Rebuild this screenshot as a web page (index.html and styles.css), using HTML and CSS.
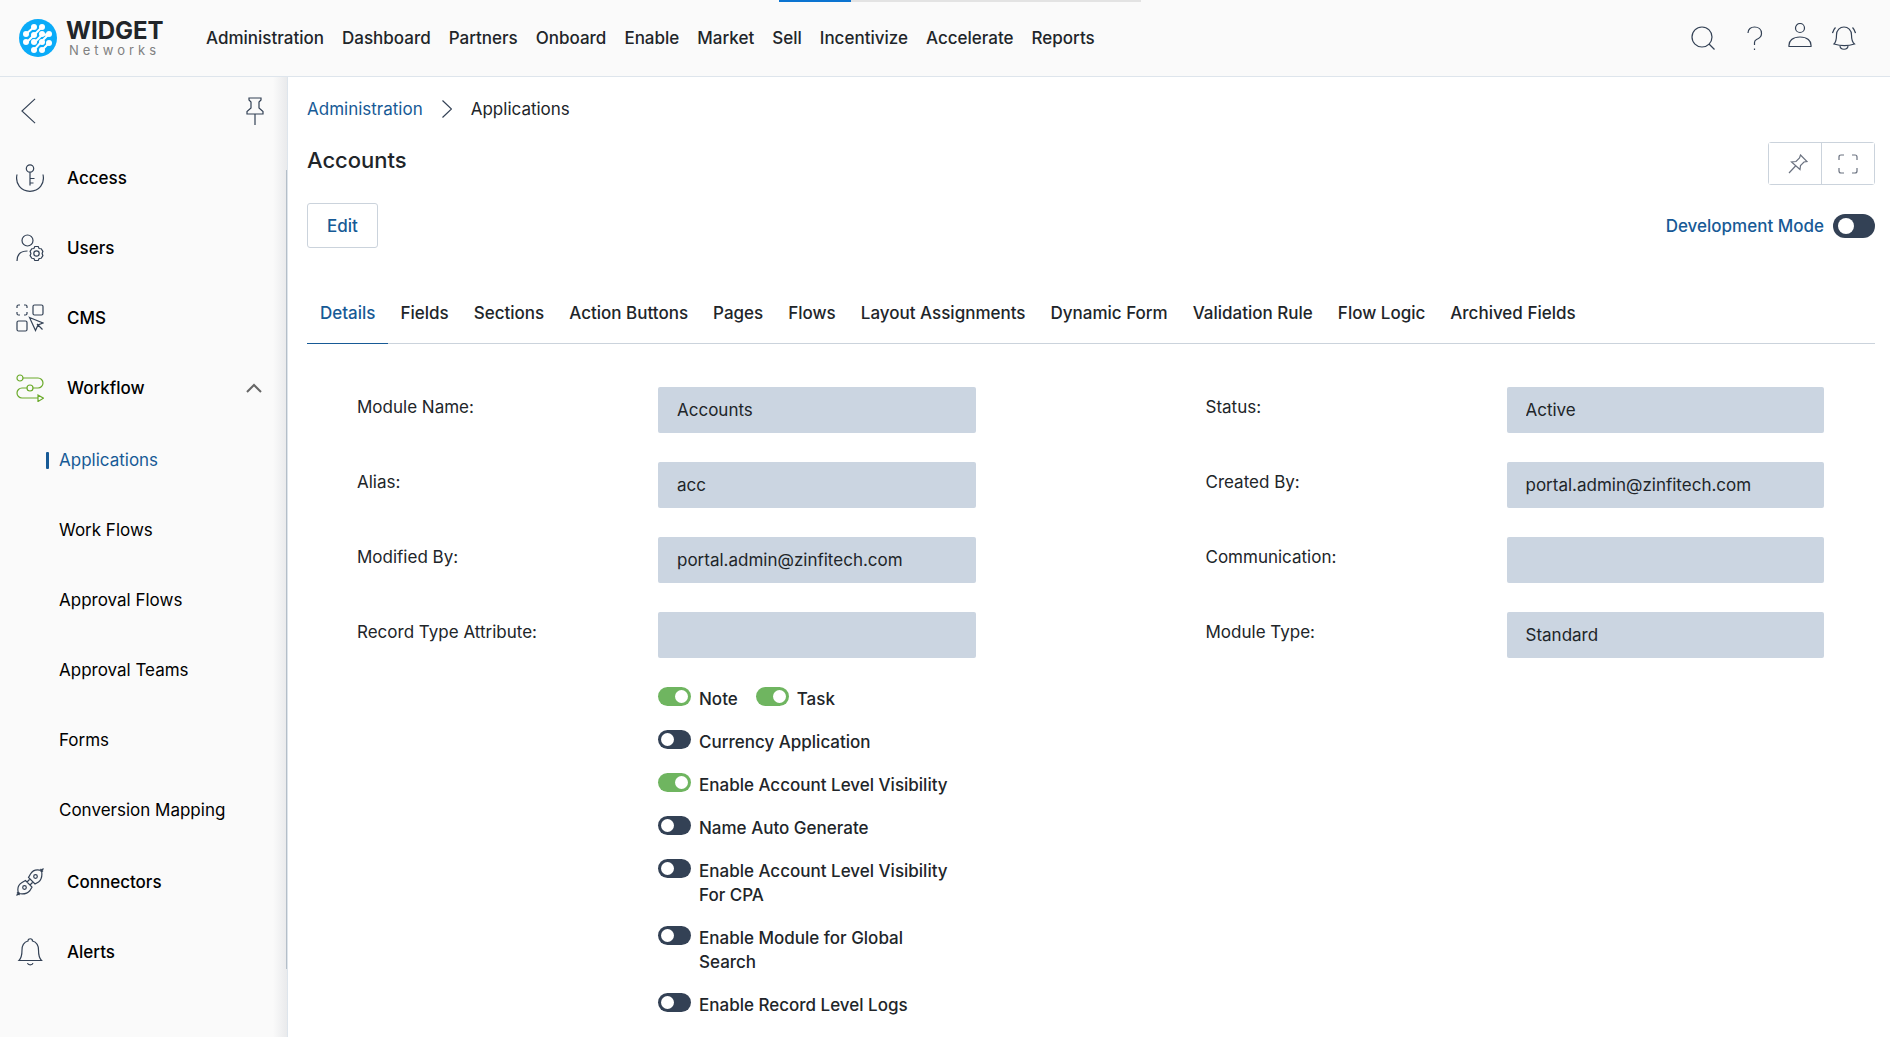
FILE: index.html
```html
<!DOCTYPE html>
<html lang="en">
<head>
<meta charset="utf-8">
<title>Accounts - Applications</title>
<link rel="stylesheet" href="styles.css">
</head>
<body>
<header class="topbar">
  <div class="loader"><div class="loader-fill"></div></div>
  <a class="brand" href="#">
    <svg class="brand-mark" viewBox="0 0 38 38" aria-hidden="true">
      <circle cx="19" cy="19" r="19" fill="#0aabf8"/>
      <g stroke="#fff" stroke-width="2" stroke-linecap="round">
        <path d="M7 15L15 8M8 23L15 16L23 8M15 24L23 16L30 15M15 31L23 22L30 15M23 31L30 24"/>
      </g>
      <g fill="#fff">
        <circle cx="15" cy="8" r="3"/><circle cx="23" cy="8" r="3"/>
        <circle cx="7" cy="15" r="3"/><circle cx="15" cy="16" r="3"/><circle cx="23" cy="15" r="3"/><circle cx="30" cy="15" r="3"/>
        <circle cx="7" cy="23" r="3"/><circle cx="15" cy="23" r="3"/><circle cx="23" cy="23" r="3"/><circle cx="30" cy="24" r="3"/>
        <circle cx="15" cy="31" r="3"/><circle cx="23" cy="31" r="3"/>
      </g>
    </svg>
    <span class="brand-text">
      <span class="brand-name">WIDGET</span>
      <span class="brand-sub">Networks</span>
    </span>
  </a>
  <nav class="main-nav" aria-label="Main">
    <a href="#">Administration</a>
    <a href="#">Dashboard</a>
    <a href="#">Partners</a>
    <a href="#">Onboard</a>
    <a href="#">Enable</a>
    <a href="#">Market</a>
    <a href="#">Sell</a>
    <a href="#">Incentivize</a>
    <a href="#">Accelerate</a>
    <a href="#">Reports</a>
  </nav>
  <div class="tools">
    <button class="icon-btn tool-search" type="button" aria-label="Search">
      <svg viewBox="0 0 24 24"><circle cx="11" cy="11" r="10"/><path d="M18 18l5.500 5.500"/></svg>
    </button>
    <button class="icon-btn tool-help" type="button" aria-label="Help">
      <svg viewBox="0 0 24 24"><path d="M5 7C5 3 8 1 11.500 1c4 0 7 2.500 7 6.500 0 3.500-2.500 5-5 6-1.500.700-2 1.500-2 3V19M11.500 22.500V24"/></svg>
    </button>
    <button class="icon-btn tool-user" type="button" aria-label="Profile">
      <svg viewBox="0 0 24 24"><circle cx="12" cy="5" r="4.500"/><path d="M1 23.500c-.600-6 4-9.500 11-9.500s11.600 3.500 11 9.500z"/></svg>
    </button>
    <button class="icon-btn tool-bell" type="button" aria-label="Notifications">
      <svg viewBox="0 0 24 24"><path d="M2 18c2-2 2.500-4 2.500-9C4.500 4 8 1 12 1s7.500 3 7.500 8c0 5 .5 7 3 9-6 2-14 2-20.500 0zM8 19.500c0 5 8 5 8 0M3.500 1.500C2 3 1 5 .500 7M20.500 1.500C22 3 23 5 23.500 7"/></svg>
    </button>
  </div>
</header>

<div class="shell">
  <aside class="sidebar">
    <div class="side-head">
      <button class="icon-btn" type="button" aria-label="Back">
        <svg class="back-icon" viewBox="0 0 16 28"><path d="M15 1L1 14l14 13"/></svg>
      </button>
      <button class="icon-btn" type="button" aria-label="Pin menu">
        <svg class="pin-icon" viewBox="0 0 18 28"><path d="M3 1h12v2l-2 2v6l4 3.500V17H1v-2.500L5 11V5L3 3zM9 17v11"/></svg>
      </button>
    </div>
    <nav class="side-nav" aria-label="Administration">
      <a class="side-item" href="#">
        <svg viewBox="0 0 28 28"><circle cx="14" cy="4.500" r="3.700"/><path d="M14 8.200V21.500M14 14.500h4.500M14 19h3.500M1 10.500C-1 20 5 27.300 14 27.300S29 20 27 10.500"/></svg>
        Access
      </a>
      <a class="side-item" href="#">
        <svg viewBox="0 0 28 28"><circle cx="11.500" cy="6.500" r="5.500"/><path d="M1 27c0-7 3.500-10 10.500-10M18.800 12.500h3.400l.9 2 2.100.2 1.700 2.600-.8 2.200.8 2.200-1.700 2.600-2.100.2-.9 2h-3.400l-.9-2-2.100-.2-1.700-2.600.8-2.200-.8-2.200 1.700-2.600 2.100-.2z"/><circle cx="20.500" cy="19.500" r="2.700"/></svg>
        Users
      </a>
      <a class="side-item" href="#">
        <svg viewBox="0 0 28 28"><rect x="17" y="1" width="10" height="10" rx="1.500"/><rect x="1" y="17" width="10" height="10" rx="1.500"/><path d="M1 4V2.500Q1 1 2.500 1H4M8 1h1.500Q11 1 11 2.500V4M11 8v1.500Q11 11 9.500 11H8M4 11H2.500Q1 11 1 9.500V8M13.500 13.500l13.500 5.500-5 2-2.500 5.500zM21 20l5.500 5.500"/></svg>
        CMS
      </a>
      <a class="side-item side-item-open" href="#" aria-expanded="true">
        <svg viewBox="0 0 28 28"><circle cx="4" cy="4" r="3"/><circle cx="14" cy="14" r="3"/><path d="M7 4h15a5 5 0 0 1 0 10H17M11 14H6a5 5 0 0 0 0 10h16M22 21v6.500l5.500-3.300z"/></svg>
        Workflow
        <svg class="chevron" viewBox="0 0 16 10"><path d="M1 9l7-7 7 7"/></svg>
      </a>
      <div class="side-sub">
        <a class="sub-item sub-active" href="#" aria-current="page">Applications</a>
        <a class="sub-item" href="#">Work Flows</a>
        <a class="sub-item" href="#">Approval Flows</a>
        <a class="sub-item" href="#">Approval Teams</a>
        <a class="sub-item" href="#">Forms</a>
        <a class="sub-item" href="#">Conversion Mapping</a>
      </div>
      <a class="side-item" href="#">
        <svg viewBox="0 0 28 28"><path d="M.500 27.500l3-3M1 24.500l2.500 2.500M2.500 25.500C1 20.500 2.500 16.500 6 14.500l3.500-2 6.500 6.500-2 3.500c-2.500 3-6.500 4-11.500 3zM24.500 3.500l3-3M24.500 1l2.500 2.500M25.500 2.500c-5-1.500-9 0-11 3.500l-2 3.500 6.500 6.500 3.500-2c3-2.500 4-6.500 3-11.500zM11 14l2.500-2.500M14 17l2.500-2.500"/><circle cx="8.500" cy="19.500" r="1.800"/><circle cx="19.500" cy="8.500" r="1.800"/></svg>
        Connectors
      </a>
      <a class="side-item" href="#">
        <svg viewBox="0 0 28 28"><path d="M3 22.500c2.500-2.500 3-5 3-10.500C6 7 8.500 4 12 3c0-3 4.500-3 4.500 0 3.500 1 6 4 6 9 0 5.500.500 8 3 10.500zM11.500 25c.5 2.500 5 2.500 5.500 0"/></svg>
        Alerts
      </a>
    </nav>
  </aside>

  <main class="content">
    <nav class="crumbs" aria-label="Breadcrumb">
      <a href="#">Administration</a>
      <svg viewBox="0 0 10 18" aria-hidden="true"><path d="M.500.500L9.500 9l-9 8.500"/></svg>
      <span>Applications</span>
    </nav>

    <div class="title-row">
      <h1>Accounts</h1>
      <div class="btn-group">
        <button class="btn-pin" type="button" aria-label="Pin page">
          <svg viewBox="0 0 20 20"><path d="M12.500 1l6.500 6.500-3 .5-3.500 3.500-.5 4L3.500 8l4.500-.5L11.500 4zM7.500 12L1 19"/></svg>
        </button>
        <button type="button" aria-label="Full screen">
          <svg viewBox="0 0 20 20"><path d="M1 6V3Q1 1 3 1H6M14 1h3Q19 1 19 3V6M19 14v3Q19 19 17 19H14M6 19H3Q1 19 1 17V14"/></svg>
        </button>
      </div>
    </div>

    <div class="action-row">
      <button class="btn-edit" type="button">Edit</button>
      <label class="dev-mode">Development Mode <input class="switch switch-lg" type="checkbox"></label>
    </div>

    <div class="tabs" role="tablist">
      <button class="tab tab-active" type="button" role="tab" aria-selected="true">Details</button>
      <button class="tab" type="button" role="tab">Fields</button>
      <button class="tab" type="button" role="tab">Sections</button>
      <button class="tab" type="button" role="tab">Action Buttons</button>
      <button class="tab" type="button" role="tab">Pages</button>
      <button class="tab" type="button" role="tab">Flows</button>
      <button class="tab" type="button" role="tab">Layout Assignments</button>
      <button class="tab" type="button" role="tab">Dynamic Form</button>
      <button class="tab" type="button" role="tab">Validation Rule</button>
      <button class="tab" type="button" role="tab">Flow Logic</button>
      <button class="tab" type="button" role="tab">Archived Fields</button>
    </div>

    <form class="details">
      <div class="field"><label for="module-name">Module Name:</label><input id="module-name" type="text" value="Accounts" readonly></div>
      <div class="field"><label for="status">Status:</label><input id="status" type="text" value="Active" readonly></div>
      <div class="field"><label for="alias">Alias:</label><input id="alias" type="text" value="acc" readonly></div>
      <div class="field"><label for="created-by">Created By:</label><input id="created-by" type="text" value="portal.admin@zinfitech.com" readonly></div>
      <div class="field"><label for="modified-by">Modified By:</label><input id="modified-by" type="text" value="portal.admin@zinfitech.com" readonly></div>
      <div class="field"><label for="communication">Communication:</label><input id="communication" type="text" readonly></div>
      <div class="field"><label for="record-type">Record Type Attribute:</label><input id="record-type" type="text" readonly></div>
      <div class="field"><label for="module-type">Module Type:</label><input id="module-type" type="text" value="Standard" readonly></div>
      <div class="options">
        <div class="option-row">
          <label class="option"><input class="switch" type="checkbox" checked><span>Note</span></label>
          <label class="option"><input class="switch" type="checkbox" checked><span>Task</span></label>
        </div>
        <label class="option"><input class="switch" type="checkbox"><span>Currency Application</span></label>
        <label class="option"><input class="switch" type="checkbox" checked><span>Enable Account Level Visibility</span></label>
        <label class="option"><input class="switch" type="checkbox"><span>Name Auto Generate</span></label>
        <label class="option"><input class="switch" type="checkbox"><span>Enable Account Level Visibility For CPA</span></label>
        <label class="option"><input class="switch" type="checkbox"><span>Enable Module for Global Search</span></label>
        <label class="option"><input class="switch" type="checkbox"><span>Enable Record Level Logs</span></label>
      </div>
    </form>
  </main>
</div>
</body>
</html>
```
FILE: styles.css
```css
:root {
  --ink: #212529;
  --link: #175a96;
  --line: #cbd3dc;
  --soft-line: #dee5ec;
  --panel: #fafafa;
  --field: #cbd5e1;
  --slate: #334155;
}

* { box-sizing: border-box; }

body {
  margin: 0;
  font-family: Inter, "Liberation Sans", sans-serif;
  font-size: 17px;
  line-height: 24px;
  color: var(--ink);
  background: #fff;
}

a { color: inherit; text-decoration: none; }

button, input { font: inherit; color: inherit; }

svg {
  display: block;
  flex: none;
  fill: none;
  stroke: var(--slate);
  stroke-width: 1.2;
}

.icon-btn {
  padding: 0;
  border: 0;
  background: none;
}

/* Top bar */
.topbar {
  position: relative;
  display: flex;
  align-items: center;
  height: 77px;
  padding: 0 34px 0 19px;
  background: var(--panel);
  border-bottom: 1px solid var(--soft-line);
}

.loader {
  position: absolute;
  top: 0;
  left: 50%;
  width: 362px;
  height: 2px;
  margin-left: -166px;
  background: #e3e3e3;
}

.loader-fill {
  width: 20%;
  height: 100%;
  background: #0b74d1;
}

.brand {
  display: flex;
  gap: 9px;
  width: 187px;
}

.brand-mark {
  width: 38px;
  height: 38px;
  stroke: none;
}

.brand-text {
  display: flex;
  flex-direction: column;
}

.brand-name {
  font-size: 24px;
  font-weight: 700;
  line-height: 24px;
}

.brand-sub {
  padding-left: 3px;
  font-size: 13px;
  line-height: 14px;
  letter-spacing: 4px;
  color: #808080;
}

.main-nav {
  display: flex;
  gap: 18px;
  font-weight: 500;
}

.tools {
  display: flex;
  align-items: center;
  margin-left: auto;
}

.tools svg { width: 24px; height: 24px; }
.tool-help { margin-left: 28px; }
.tool-user { margin: 0 20px 6px 21px; }

/* Sidebar */
.shell {
  display: flex;
  min-height: calc(100vh - 77px);
}

.sidebar {
  position: relative;
  flex: none;
  width: 288px;
  background: linear-gradient(to left, #e9eaec, var(--panel) 14px);
  border-right: 1px solid var(--soft-line);
}

.sidebar::after {
  content: "";
  position: absolute;
  top: 93px;
  right: 0;
  width: 1px;
  height: 799px;
  background: #b4bec8;
}

.side-head {
  display: flex;
  justify-content: space-between;
  padding: 20px 23px 18px 21px;
}

.back-icon { width: 15px; height: 28px; }
.pin-icon { width: 18px; height: 28px; }

.side-item {
  display: flex;
  align-items: center;
  gap: 23px;
  height: 70px;
  padding: 0 25px 0 16px;
  font-weight: 500;
  color: #000;
}

.side-item svg { width: 28px; height: 28px; }

.side-item-open svg { stroke: #6aaa2a; }

.side-item .chevron {
  width: 16px;
  height: 10px;
  margin-left: auto;
  stroke: #666;
  stroke-width: 2;
}

.side-sub { padding: 2px 0; }

.sub-item {
  display: flex;
  align-items: center;
  height: 70px;
  padding-left: 59px;
  color: #000;
}

.sub-active {
  padding-left: 46px;
  color: var(--link);
}

.sub-active::before {
  content: "";
  width: 3px;
  height: 17px;
  margin-right: 10px;
  background: var(--link);
  border-radius: 1px;
}

/* Content */
.content {
  flex: 1;
  min-width: 0;
  padding: 20px 15px 20px 19px;
}

.crumbs {
  display: flex;
  align-items: center;
  gap: 19px;
}

.crumbs a { color: var(--link); }
.crumbs svg { width: 10px; height: 18px; }

.title-row {
  display: flex;
  justify-content: space-between;
  align-items: flex-start;
  margin-top: 21px;
}

h1 {
  margin: 3px 0 0;
  font-size: 22px;
  font-weight: 500;
  line-height: 30px;
}

.btn-group {
  display: flex;
  border: 1px solid var(--line);
  border-radius: 3px;
}

.btn-group button {
  display: flex;
  align-items: center;
  justify-content: center;
  width: 53px;
  height: 41px;
  padding: 0;
  border: 0;
  background: #fff;
}

.btn-group .btn-pin {
  width: 52px;
  padding-left: 6px;
}

.btn-group button + button { border-left: 1px solid var(--line); }
.btn-group svg { width: 20px; height: 20px; stroke: #6b7280; }

.action-row {
  display: flex;
  justify-content: space-between;
  align-items: center;
  margin-top: 18px;
}

.btn-edit {
  height: 45px;
  padding: 0 19px;
  border: 1px solid var(--line);
  border-radius: 3px;
  background: #fff;
  color: var(--link);
  font-weight: 500;
}

.dev-mode {
  display: flex;
  align-items: center;
  gap: 9px;
  color: var(--link);
  font-weight: 500;
}

.tabs {
  display: flex;
  margin-top: 34px;
  border-bottom: 1px solid var(--line);
}

.tab {
  height: 62px;
  margin-bottom: -1px;
  padding: 0 12px 0 13px;
  border: 0;
  border-bottom: 1px solid transparent;
  background: none;
  font-weight: 500;
}

.tab-active {
  color: var(--link);
  border-bottom-color: var(--link);
}

/* Details form */
.details {
  display: grid;
  grid-template-columns: 1fr 1fr;
  gap: 29px 230px;
  padding: 43px 51px 0 50px;
}

.field {
  display: grid;
  grid-template-columns: 301px 1fr;
  align-items: start;
}

.field label { padding-top: 8px; }

.field input {
  width: 100%;
  height: 46px;
  padding: 0 19px;
  border: 0;
  border-radius: 2px;
  background: var(--field);
}

.options {
  display: flex;
  flex-direction: column;
  gap: 19px;
  padding: 0 20px 0 301px;
  font-weight: 500;
}

.option-row { display: flex; gap: 18px; }

.option {
  display: flex;
  align-items: flex-start;
  gap: 8px;
}

.switch {
  appearance: none;
  flex: none;
  display: flex;
  align-items: center;
  width: 33px;
  height: 19px;
  margin: 0;
  padding: 0 3px;
  border-radius: 12px;
  background: var(--slate);
}

.switch::before {
  content: "";
  width: 13px;
  height: 13px;
  border-radius: 50%;
  background: #fff;
}

.switch:checked {
  justify-content: flex-end;
  background: #6fb560;
}

.switch-lg {
  width: 42px;
  height: 24px;
  padding: 0 5px;
}

.switch-lg::before { width: 16px; height: 16px; }
```
